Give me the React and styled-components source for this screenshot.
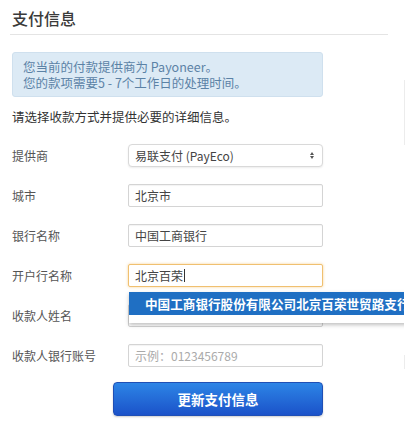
import React from "react";
import styled, { createGlobalStyle } from "styled-components";

const Global = createGlobalStyle`
  html, body { margin: 0; padding: 0; background: #fff; }
  body { font-family: "Noto Sans CJK SC", "Liberation Sans", sans-serif; color: #333; }
`;

const Shell = styled.div`
  display: flex;
  width: 418px;
  height: 429px;
  overflow: hidden;
`;

const Page = styled.div`
  width: 404px;
  flex: none;
  overflow: hidden;
  padding: 8px 0 0 0;
  box-sizing: border-box;
`;

const Rail = styled.div`
  flex: 1;
  display: flex;
  flex-direction: column;
  align-items: flex-start;
  padding-top: 80px;
`;

const RailLine = styled.div`
  width: 1px;
  height: ${(p) => p.$h}px;
  margin-bottom: ${(p) => p.$mb || 0}px;
  background: #ececec;
`;

const Title = styled.h2`
  margin: 0 16px 0 10px;
  padding: 0 0 5px 2px;
  font-size: 16px;
  font-weight: 500;
  color: #3a3a3a;
  line-height: 21px;
  border-bottom: 1px solid #e4e4e4;
  width: 376px;
`;

const Alert = styled.div`
  margin: 17px 0 0 12px;
  width: 311px;
  height: 45px;
  box-sizing: border-box;
  padding: 6px 10px;
  background: #dceaf5;
  border: 1px solid #cfe0ee;
  border-radius: 3px;
  color: #5b82a6;
  font-size: 12.5px;
  line-height: 16px;
  white-space: nowrap;
`;

const AlertLine = styled.div`
  height: 16px;
`;

const Intro = styled.p`
  margin: 12px 0 0 12px;
  font-size: 12.5px;
  line-height: 16px;
  color: #333;
`;

const Form = styled.div`
  margin: 10px 0 0 12px;
  display: flex;
  flex-direction: column;
`;

const Row = styled.div`
  display: grid;
  grid-template-columns: 116px 195px;
  align-items: center;
  height: 40px;
`;

const Label = styled.label`
  font-size: 12px;
  color: #555;
`;

const Field = styled.div`
  position: relative;
  height: 23px;
  box-sizing: border-box;
  border: 1px solid ${(p) => (p.$focus ? "#f0c070" : "#d4d4d4")};
  box-shadow: ${(p) =>
    p.$focus ? "0 0 3px rgba(240,180,80,0.6)" : "inset 0 1px 1px rgba(0,0,0,0.05)"};
  border-radius: 2px;
  background: #fff;
  display: flex;
  align-items: center;
  padding: 0 6px;
  font-size: 12px;
  color: ${(p) => (p.$placeholder ? "#aaa" : "#444")};
`;

const SelectBox = styled(Field)`
  border-radius: 4px;
  justify-content: space-between;
  border-color: #d9d9d9;
  box-shadow: 0 1px 2px rgba(0,0,0,0.08);
`;

const Caret = styled.span`
  display: inline-block;
  width: 0;
  height: 0;
  border-left: 2.5px solid transparent;
  border-right: 2.5px solid transparent;
  border-${(p) => (p.$up ? "bottom" : "top")}: 3px solid #555;
`;

const Carets = styled.span`
  display: flex;
  flex-direction: column;
  gap: 1px;
  margin-right: 2px;
`;

const Cursor = styled.span`
  display: inline-block;
  width: 1px;
  height: 13px;
  background: #333;
  margin-left: 1px;
`;

const Dropdown = styled.div`
  position: absolute;
  top: 27px;
  left: 0;
  width: 320px;
  background: #fff;
  box-shadow: 0 2px 4px rgba(0,0,0,0.25);
  padding: 0 0 8px 0;
  z-index: 5;
`;

const Option = styled.div`
  background: #1f6fc3;
  color: #fff;
  font-weight: 700;
  font-size: 12.6px;
  height: 23px;
  line-height: 23px;
  padding-left: 16px;
  white-space: nowrap;
`;

const ButtonRow = styled.div`
  display: flex;
  padding-left: 113px;
  margin-top: 7px;
`;

const Button = styled.button`
  width: 210px;
  height: 34px;
  border: 1px solid #1f4fb5;
  border-radius: 4px;
  background: linear-gradient(#2d85e6, #1b52c9);
  color: #fff;
  font-family: inherit;
  font-size: 13.5px;
  font-weight: 700;
  box-shadow: 0 1px 2px rgba(0,0,0,0.2);
`;

export default function App() {
  return (
    <Shell>
      <Global />
      <Page>
        <Title>支付信息</Title>
        <Alert>
          <AlertLine>您当前的付款提供商为 Payoneer。</AlertLine>
          <AlertLine>您的款项需要5 - 7个工作日的处理时间。</AlertLine>
        </Alert>
        <Intro>请选择收款方式并提供必要的详细信息。</Intro>
        <Form>
          <Row>
            <Label>提供商</Label>
            <SelectBox>
              易联支付 (PayEco)
              <Carets>
                <Caret $up />
                <Caret />
              </Carets>
            </SelectBox>
          </Row>
          <Row>
            <Label>城市</Label>
            <Field>北京市</Field>
          </Row>
          <Row>
            <Label>银行名称</Label>
            <Field>中国工商银行</Field>
          </Row>
          <Row>
            <Label>开户行名称</Label>
            <Field $focus>
              北京百荣
              <Cursor />
              <Dropdown>
                <Option>中国工商银行股份有限公司北京百荣世贸路支行</Option>
              </Dropdown>
            </Field>
          </Row>
          <Row>
            <Label>收款人姓名</Label>
            <Field />
          </Row>
          <Row>
            <Label>收款人银行账号</Label>
            <Field $placeholder>示例：0123456789</Field>
          </Row>
        </Form>
        <ButtonRow>
          <Button>更新支付信息</Button>
        </ButtonRow>
      </Page>
      <Rail>
        <RailLine $h={65} $mb={210} />
        <RailLine $h={14} />
      </Rail>
    </Shell>
  );
}
